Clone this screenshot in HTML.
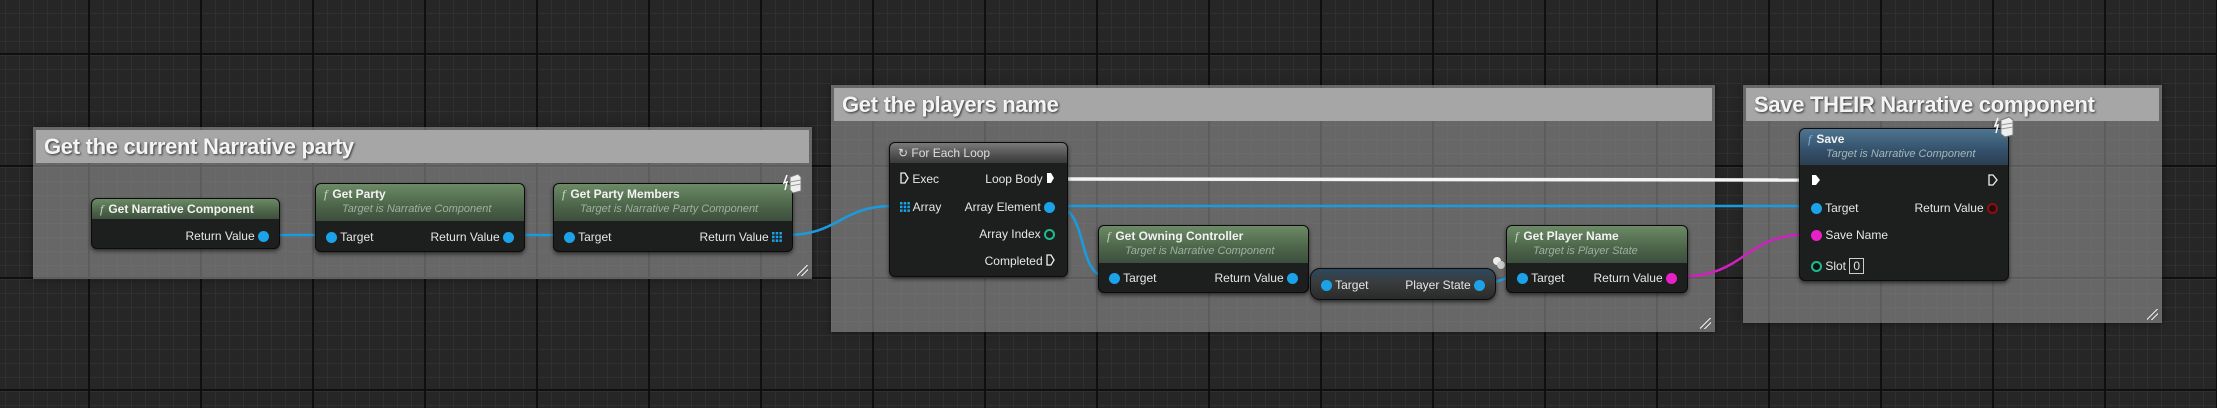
<!DOCTYPE html>
<html><head><meta charset="utf-8"><style>
*{margin:0;padding:0;box-sizing:border-box}
body{width:2217px;height:408px;overflow:hidden;position:relative;font-family:"Liberation Sans",sans-serif;
background-color:#262626;
background-image:
linear-gradient(90deg,#0f0f0f 0,#0f0f0f 2px,transparent 2px),
linear-gradient(0deg,#0f0f0f 0,#0f0f0f 2px,transparent 2px),
linear-gradient(90deg,#303030 0,#303030 1px,transparent 1px),
linear-gradient(0deg,#303030 0,#303030 1px,transparent 1px);
background-size:112px 112px,112px 112px,14px 14px,14px 14px;
background-position:88px 0,0 55px,5px 0,0 0;}
.cm{position:absolute;background:rgba(150,150,150,.58);box-shadow:0 0 6px rgba(0,0,0,.5)}
.ct{position:absolute;left:3px;right:3px;top:3px;height:33px;background:#a6a6a6;color:#f4f4f4;font-weight:bold;font-size:22px;line-height:33px;padding-left:8px;text-shadow:1px 1px 2px #333;letter-spacing:-0.3px}
.rs{position:absolute;right:4px;bottom:3px;width:11px;height:11px;background:linear-gradient(135deg,transparent 45%,#eee 45%,#eee 52%,transparent 52%,transparent 68%,#eee 68%,#eee 75%,transparent 75%)}
.n{position:absolute;background:#1d1f1e;border:1px solid #0b0b0b;border-radius:6px;box-shadow:0 2px 4px rgba(0,0,0,.6);color:#e8e8e8;font-size:12px}
.h{position:absolute;left:0;right:0;top:0;border-radius:5px 5px 0 0;background:linear-gradient(180deg,#6c8a66 0%,#4c6449 60%,#3d4f3e 100%)}
.hb{background:linear-gradient(180deg,#4f7590 0%,#33506a 60%,#2b3f52 100%)}
.hg{background:linear-gradient(180deg,#7a7a7a 0%,#4a4a4a 70%,#3a3a3a 100%)}
.t{position:absolute;left:8px;top:3px;font-size:12px;font-weight:bold;color:#f2f2f2;white-space:nowrap}
.t i{font-family:"Liberation Serif",serif;font-style:italic;font-weight:normal;color:#c8d8c8;margin-right:5px}
.s{position:absolute;left:26px;top:19px;font-size:11px;font-style:italic;color:#9fb09f;white-space:nowrap}
.p{position:absolute;white-space:nowrap;font-size:12px;color:#e6e6e6}
.d{display:inline-block;width:11px;height:11px;border-radius:50%;background:#1ca2e8;vertical-align:-2px}
.dr{display:inline-block;vertical-align:-1px}
</style></head><body>

<div class="cm" style="left:33px;top:127px;width:779px;height:152px"><div class="ct">Get the current Narrative party</div><div class="rs"></div></div>
<div class="cm" style="left:831px;top:85px;width:884px;height:247px"><div class="ct">Get the players name</div><div class="rs"></div></div>
<div class="cm" style="left:1743px;top:85px;width:419px;height:238px"><div class="ct">Save THEIR Narrative component</div><div class="rs"></div></div>

<svg width="2217" height="408" style="position:absolute;left:0;top:0">
<g fill="none" stroke-width="2.5">
<path d="M268 235 L326 235" stroke="#1a9be0"/>
<path d="M511 235 L563 235" stroke="#1a9be0"/>
<path d="M786 235 C840 235 840 206 893 206" stroke="#1a9be0"/>
<path d="M1054 206 L1810 206" stroke="#1a9be0"/>
<path d="M1054 206 C1090 206 1075 277 1108 277" stroke="#1a9be0"/>
<path d="M1296 277 C1310 277 1310 284 1322 284" stroke="#1a9be0"/>
<path d="M1482 284 C1500 284 1500 277 1516 277" stroke="#1a9be0"/>
<path d="M1676 277 C1750 277 1740 234 1812 234" stroke="#d21fbf"/>
<path d="M1056 179 L1812 180" stroke="#f4f4f4" stroke-width="3.5"/>
</g>
</svg>

<div class="n" style="left:91px;top:198px;width:189px;height:51px">
<div class="h" style="height:20px"></div>
<div class="t"><i>f</i>Get Narrative Component</div>
<div class="p" style="right:10px;top:30px">Return Value <span class="d"></span></div>
</div>
<div class="n" style="left:315px;top:183px;width:210px;height:69px">
<div class="h" style="height:37px"></div>
<div class="t"><i>f</i>Get Party</div>
<div class="s">Target is Narrative Component</div>
<div class="p" style="left:10px;top:46px"><span class="d"></span> Target</div>
<div class="p" style="right:10px;top:46px">Return Value <span class="d"></span></div>
</div>
<div class="n" style="left:553px;top:183px;width:240px;height:69px">
<div class="h" style="height:37px"></div>
<div class="t"><i>f</i>Get Party Members</div>
<div class="s">Target is Narrative Party Component</div>
<div class="p" style="left:10px;top:46px"><span class="d"></span> Target</div>
<div class="p" style="right:10px;top:46px">Return Value <svg class="dr" width="10" height="10"><g fill="#1ca2e8"><rect x="0" y="0" width="2.5" height="2.5"/><rect x="3.7" y="0" width="2.5" height="2.5"/><rect x="7.4" y="0" width="2.5" height="2.5"/><rect x="0" y="3.7" width="2.5" height="2.5"/><rect x="3.7" y="3.7" width="2.5" height="2.5"/><rect x="7.4" y="3.7" width="2.5" height="2.5"/><rect x="0" y="7.4" width="2.5" height="2.5"/><rect x="3.7" y="7.4" width="2.5" height="2.5"/><rect x="7.4" y="7.4" width="2.5" height="2.5"/></g></svg></div>
</div>
<svg width="20" height="22" style="position:absolute;left:783px;top:173px"><path d="M4 2 L1 10 L4 9 L2 17" stroke="#fff" fill="none" stroke-width="1.5"/><path d="M7 4 L15 1 L18 4 L18 18 L10 20 L7 17Z" fill="#eee" stroke="#777"/><path d="M7 9 L18 7 M7 13 L18 11" stroke="#999"/></svg>

<div class="n" style="left:889px;top:142px;width:179px;height:135px">
<div class="h hg" style="height:20px"></div>
<div class="t" style="font-weight:normal;color:#ddd">&#x21BB; For Each Loop</div>
<div class="p" style="left:10px;top:29px"><svg class="dr" width="9" height="12"><path d="M1 1 H5 L8 6 L5 11 H1Z" fill="none" stroke="#eee" stroke-width="1.3"/></svg> Exec</div>
<div class="p" style="right:12px;top:29px">Loop Body <svg class="dr" width="9" height="12"><path d="M1 1 H5 L8 6 L5 11 H1Z" fill="#fff"/></svg></div>
<div class="p" style="left:10px;top:57px"><svg class="dr" width="10" height="10"><g fill="#1ca2e8"><rect x="0" y="0" width="2.5" height="2.5"/><rect x="3.7" y="0" width="2.5" height="2.5"/><rect x="7.4" y="0" width="2.5" height="2.5"/><rect x="0" y="3.7" width="2.5" height="2.5"/><rect x="3.7" y="3.7" width="2.5" height="2.5"/><rect x="7.4" y="3.7" width="2.5" height="2.5"/><rect x="0" y="7.4" width="2.5" height="2.5"/><rect x="3.7" y="7.4" width="2.5" height="2.5"/><rect x="7.4" y="7.4" width="2.5" height="2.5"/></g></svg> Array</div>
<div class="p" style="right:12px;top:57px">Array Element <span class="d"></span></div>
<div class="p" style="right:12px;top:84px">Array Index <span class="d" style="background:none;border:2px solid #1dbb8d"></span></div>
<div class="p" style="right:12px;top:111px">Completed <svg class="dr" width="9" height="12"><path d="M1 1 H5 L8 6 L5 11 H1Z" fill="none" stroke="#eee" stroke-width="1.3"/></svg></div>
</div>

<div class="n" style="left:1098px;top:225px;width:211px;height:68px">
<div class="h" style="height:37px"></div>
<div class="t"><i>f</i>Get Owning Controller</div>
<div class="s">Target is Narrative Component</div>
<div class="p" style="left:10px;top:45px"><span class="d"></span> Target</div>
<div class="p" style="right:10px;top:45px">Return Value <span class="d"></span></div>
</div>
<div class="n" style="left:1310px;top:268px;width:186px;height:32px;border-radius:10px;background:linear-gradient(180deg,#2c4a5e 0%,#3a3c3c 45%,#2a2a2a 100%)">
<div class="p" style="left:10px;top:9px"><span class="d"></span> Target</div>
<div class="p" style="right:10px;top:9px">Player State <span class="d"></span></div>
</div>
<svg width="14" height="14" style="position:absolute;left:1492px;top:256px"><circle cx="5" cy="5" r="4" fill="#eee"/><circle cx="9" cy="9" r="4" fill="#ccc"/></svg>
<div class="n" style="left:1506px;top:225px;width:182px;height:68px">
<div class="h" style="height:37px"></div>
<div class="t"><i>f</i>Get Player Name</div>
<div class="s">Target is Player State</div>
<div class="p" style="left:10px;top:45px"><span class="d"></span> Target</div>
<div class="p" style="right:10px;top:45px">Return Value <span class="d" style="background:#e820c8"></span></div>
</div>

<div class="n" style="left:1799px;top:128px;width:210px;height:153px">
<div class="h hb" style="height:36px"></div>
<div class="t"><i style="color:#7fb4e0">f</i>Save</div>
<div class="s" style="color:#a3b7b8">Target is Narrative Component</div>
<div class="p" style="left:11px;top:45px"><svg class="dr" width="10" height="12"><path d="M1 1 H5 L9 6 L5 11 H1Z" fill="#fff"/></svg></div>
<div class="p" style="right:10px;top:45px"><svg class="dr" width="10" height="12"><path d="M1 1 H5 L9 6 L5 11 H1Z" fill="none" stroke="#eee" stroke-width="1.3"/></svg></div>
<div class="p" style="left:11px;top:72px"><span class="d"></span> Target</div>
<div class="p" style="right:10px;top:72px">Return Value <span class="d" style="background:#2a0a0a;border:2px solid #8a1010"></span></div>
<div class="p" style="left:11px;top:99px"><span class="d" style="background:#e820c8"></span> Save Name</div>
<div class="p" style="left:11px;top:129px"><span class="d" style="background:#111;border:2px solid #1dbb8d"></span> Slot <span style="display:inline-block;border:1px solid #ccc;padding:0 3px;line-height:14px">0</span></div>
</div>
<svg width="22" height="24" style="position:absolute;left:1994px;top:116px"><path d="M4 2 L1 10 L4 9 L2 17" stroke="#fff" fill="none" stroke-width="1.5"/><path d="M7 4 L15 1 L19 4 L19 19 L11 21 L7 18Z" fill="#eee" stroke="#777"/><path d="M7 9 L19 7 M7 13 L19 11" stroke="#999"/></svg>
</body></html>
